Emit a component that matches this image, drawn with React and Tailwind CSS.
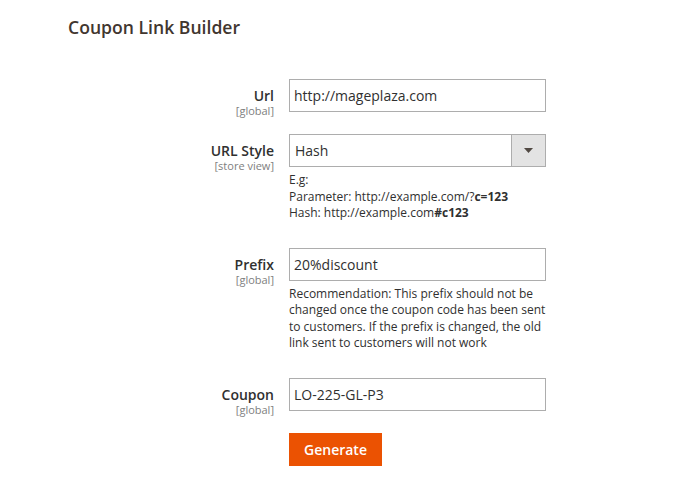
import React from 'react'

const Scope = ({ children }) => (
	<div className="text-[11px] leading-[13px] text-[#808080]">{children}</div>
)

const Field = ({ label, scope, className = '', children }) => (
	<div className={`flex items-start gap-[15px] ${className}`}>
		<div className="w-[274px] shrink-0 text-right pt-[8px]">
			<div className="text-[14px] leading-[17px] font-semibold text-[#303030]">{label}</div>
			<Scope>{scope}</Scope>
		</div>
		<div className="w-[257px]">{children}</div>
	</div>
)

const TextBox = ({ value }) => (
	<div className="h-[33px] border border-[#adadad] bg-white flex items-center pl-[4px] text-[14px] text-[#303030]">
		{value}
	</div>
)

const SelectBox = ({ value }) => (
	<div className="h-[33px] border border-[#adadad] bg-white flex items-stretch text-[14px] text-[#303030]">
		<div className="flex-1 flex items-center pl-[5px]">{value}</div>
		<div className="w-[34px] border-l border-[#adadad] bg-[#e3e3e3] flex items-center justify-center">
			<svg width="9" height="5" viewBox="0 0 9 5">
				<polygon points="0,0 9,0 4.5,5" fill="#514943" />
			</svg>
		</div>
	</div>
)

const Note = ({ className = '', children }) => (
	<div className={`text-[12px] leading-[16.5px] text-[#303030] whitespace-nowrap ${className}`}>{children}</div>
)

export default function App() {
	return (
		<div className="w-[684px] h-[499px] bg-white overflow-hidden" style={{ fontFamily: '"Open Sans", sans-serif' }}>
			<div className="pl-[68px] pt-[16px] text-[17.6px] leading-[22px] font-semibold text-[#41362f]">
				Coupon Link Builder
			</div>

			<Field label="Url" scope="[global]" className="mt-[41px]">
				<TextBox value="http://mageplaza.com" />
			</Field>

			<Field label="URL Style" scope="[store view]" className="mt-[17px]">
				<SelectBox value="Hash" />
				<Note className="mt-[5px]">
					<div>E.g:</div>
					<div>Parameter: http://example.com/?<b className="font-bold">c=123</b></div>
					<div>Hash: http://example.com<b className="font-bold">#c123</b></div>
				</Note>
			</Field>

			<Field label="Prefix" scope="[global]" className="mt-[26px]">
				<TextBox value="20%discount" />
				<Note className="mt-[5px]">
					<div>Recommendation: This prefix should not be</div>
					<div>changed once the coupon code has been sent</div>
					<div>to customers. If the prefix is changed, the old</div>
					<div>link sent to customers will not work</div>
				</Note>
			</Field>

			<Field label="Coupon" scope="[global]" className="mt-[26px]">
				<TextBox value="LO-225-GL-P3" />
				<button className="mt-[22px] w-[93px] h-[33px] bg-[#eb5202] text-white text-[14px] font-semibold">
					Generate
				</button>
			</Field>
		</div>
	)
}
